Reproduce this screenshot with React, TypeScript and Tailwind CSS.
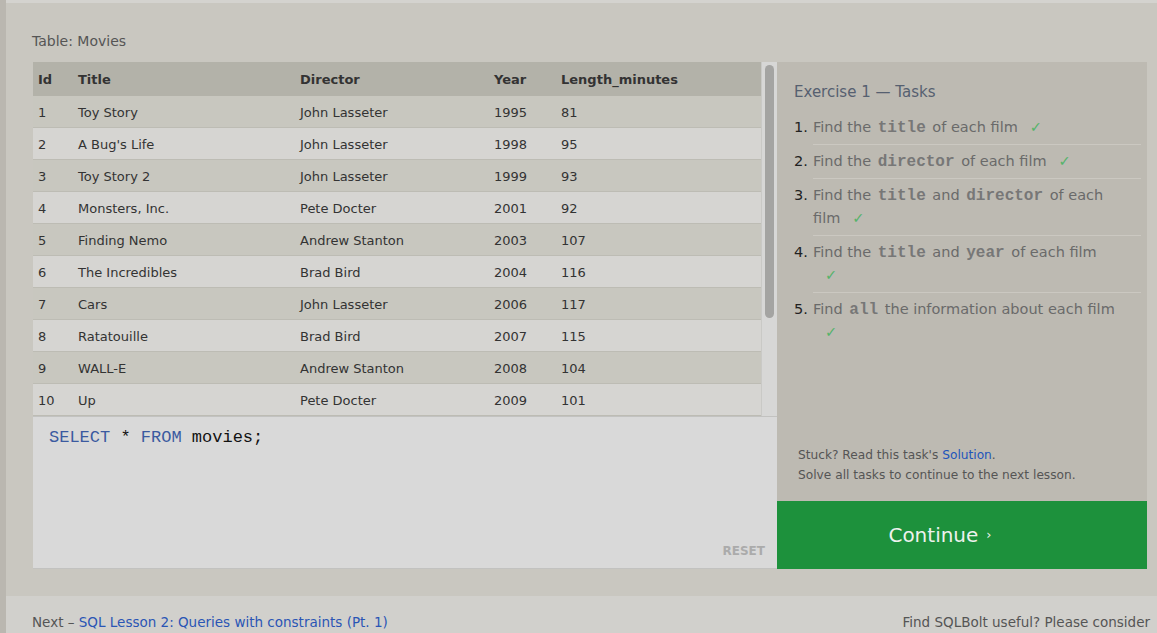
import React from "react";

const movies = [
  { id: 1, title: "Toy Story", director: "John Lasseter", year: 1995, length: 81 },
  { id: 2, title: "A Bug's Life", director: "John Lasseter", year: 1998, length: 95 },
  { id: 3, title: "Toy Story 2", director: "John Lasseter", year: 1999, length: 93 },
  { id: 4, title: "Monsters, Inc.", director: "Pete Docter", year: 2001, length: 92 },
  { id: 5, title: "Finding Nemo", director: "Andrew Stanton", year: 2003, length: 107 },
  { id: 6, title: "The Incredibles", director: "Brad Bird", year: 2004, length: 116 },
  { id: 7, title: "Cars", director: "John Lasseter", year: 2006, length: 117 },
  { id: 8, title: "Ratatouille", director: "Brad Bird", year: 2007, length: 115 },
  { id: 9, title: "WALL-E", director: "Andrew Stanton", year: 2008, length: 104 },
  { id: 10, title: "Up", director: "Pete Docter", year: 2009, length: 101 },
];

const cols = "grid grid-cols-[40px_222px_194px_67px_1fr] pl-[5px] items-center";

function Code({ children }: { children: React.ReactNode }) {
  return (
    <code className="font-['Liberation_Mono',monospace] font-bold text-[16px] leading-[20px] text-[#777] px-[2px]">
      {children}
    </code>
  );
}

function Check() {
  return <span className="text-[#55b36a] ml-[12px]">✓</span>;
}

const tasks: React.ReactNode[] = [
  <>Find the <Code>title</Code> of each film<Check /></>,
  <>Find the <Code>director</Code> of each film<Check /></>,
  <>Find the <Code>title</Code> and <Code>director</Code> of each<br />film<Check /></>,
  <>Find the <Code>title</Code> and <Code>year</Code> of each film<br /><Check /></>,
  <>Find <Code>all</Code> the information about each film<br /><Check /></>,
];

export default function App() {
  return (
    <div className="w-[1157px] h-[633px] flex overflow-hidden bg-[#d1d0cc] font-['DejaVu_Sans',Tahoma,sans-serif]">
      {/* left edge */}
      <div className="w-[6px] shrink-0 bg-[#bab7b0]" />

      <div className="flex-1 flex flex-col">
        <div className="h-[3px] bg-[#d4d3cf]" />

        <main className="h-[593px] bg-[#c9c7c0] pl-[26px] pr-[10px] pt-[28px]">
          <div className="text-[14px] leading-[20px] text-[#555] mb-[11px]">Table: Movies</div>

          <div className="flex">
            {/* Left: table + editor */}
            <div className="w-[744px] ml-px flex flex-col">
              <div className="h-[354px] flex overflow-hidden">
                <div className="w-[728px] text-[13px] text-[#333]">
                  <div className={`${cols} h-[34px] bg-[#b3b2a9] font-bold pt-px`}>
                    <div>Id</div>
                    <div>Title</div>
                    <div>Director</div>
                    <div>Year</div>
                    <div>Length_minutes</div>
                  </div>
                  {movies.map((m, i) => (
                    <div
                      key={m.id}
                      className={`${cols} h-[32px] pt-[2px] border-b border-[#bdbcb4] ${i % 2 === 0 ? "bg-[#c8c7bf]" : "bg-[#d6d5d2]"}`}
                    >
                      <div>{m.id}</div>
                      <div>{m.title}</div>
                      <div>{m.director}</div>
                      <div>{m.year}</div>
                      <div>{m.length}</div>
                    </div>
                  ))}
                </div>
                {/* scrollbar */}
                <div className="w-[16px] bg-[#d7d7d6] border-l border-[#c9c9c6] pt-[3px] px-[3px]">
                  <div className="h-[253px] rounded-full bg-[#a4a4a2]" />
                </div>
              </div>

              <div className="h-[153px] bg-[#d9d9d9] border-t border-[#c2c2c0] border-b flex flex-col pl-[16px] pr-[12px] pt-[10px] pb-[8px]">
                <div className="font-['Liberation_Mono',monospace] text-[17px] leading-[22px] text-[#111]">
                  <span className="text-[#3b5aa0]">SELECT</span> * <span className="text-[#3b5aa0]">FROM</span> movies;
                </div>
                <div className="mt-auto self-end text-[12px] font-bold text-[#ababab]">RESET</div>
              </div>
            </div>

            {/* Right: tasks */}
            <div className="w-[370px] flex flex-col">
              <div className="h-[439px] bg-[#bdbab2] flex flex-col pl-[17px] pr-[6px] pt-[19px] pb-[16px]">
                <div className="text-[15px] leading-[22px] text-[#566070] mb-[8px]">Exercise 1 — Tasks</div>
                <ol>
                  {tasks.map((t, i) => (
                    <li key={i} className="flex text-[14.5px] leading-[23px]">
                      <span className="w-[19px] shrink-0 pt-[5px] text-[#222]">{i + 1}.</span>
                      <div
                        className={`flex-1 py-[5px] text-[#6a6a6a] ${i < tasks.length - 1 ? "border-b border-[#cbc8c1]" : ""}`}
                      >
                        {t}
                      </div>
                    </li>
                  ))}
                </ol>
                <div className="mt-auto pl-[4px] text-[12.2px] leading-[20px] text-[#555]">
                  <div>
                    Stuck? Read this task's <span className="text-[#2255bb]">Solution</span>.
                  </div>
                  <div>Solve all tasks to continue to the next lesson.</div>
                </div>
              </div>
              <div className="h-[68px] bg-[#1d913c] flex items-center justify-center text-[#eef2ee] text-[20px] pr-[44px]">
                Continue <span className="text-[13px] ml-[8px]">›</span>
              </div>
            </div>
          </div>
        </main>

        <footer className="flex-1 flex items-end justify-between pl-[26px] pr-[7px] pb-px text-[13.5px] leading-[20px] text-[#555]">
          <div>
            Next – <span className="text-[#2a55b5]">SQL Lesson 2: Queries with constraints (Pt. 1)</span>
          </div>
          <div>Find SQLBolt useful? Please consider</div>
        </footer>
      </div>
    </div>
  );
}
